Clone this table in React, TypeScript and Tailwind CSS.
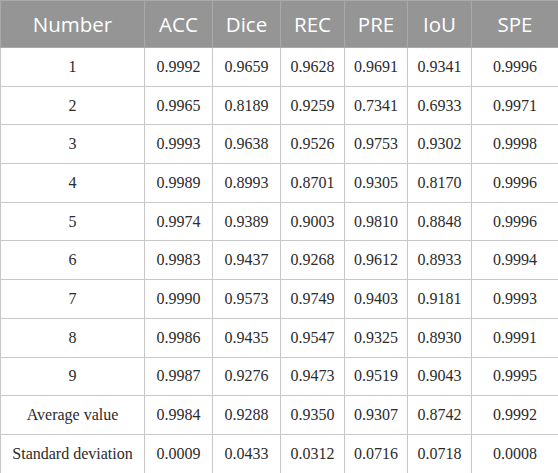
const headers = ["Number", "ACC", "Dice", "REC", "PRE", "IoU", "SPE"];

const widths = ["w-[144px]", "w-[68px]", "w-[68px]", "w-[64px]", "w-[63px]", "w-[64px]", "w-[87px]"];

const rows: string[][] = [
  ["1", "0.9992", "0.9659", "0.9628", "0.9691", "0.9341", "0.9996"],
  ["2", "0.9965", "0.8189", "0.9259", "0.7341", "0.6933", "0.9971"],
  ["3", "0.9993", "0.9638", "0.9526", "0.9753", "0.9302", "0.9998"],
  ["4", "0.9989", "0.8993", "0.8701", "0.9305", "0.8170", "0.9996"],
  ["5", "0.9974", "0.9389", "0.9003", "0.9810", "0.8848", "0.9996"],
  ["6", "0.9983", "0.9437", "0.9268", "0.9612", "0.8933", "0.9994"],
  ["7", "0.9990", "0.9573", "0.9749", "0.9403", "0.9181", "0.9993"],
  ["8", "0.9986", "0.9435", "0.9547", "0.9325", "0.8930", "0.9991"],
  ["9", "0.9987", "0.9276", "0.9473", "0.9519", "0.9043", "0.9995"],
  ["Average value", "0.9984", "0.9288", "0.9350", "0.9307", "0.8742", "0.9992"],
  ["Standard deviation", "0.0009", "0.0433", "0.0312", "0.0716", "0.0718", "0.0008"],
];

export default function App() {
  return (
    <div className="w-[558px] h-[473px] bg-white overflow-hidden">
      <table className="w-[558px] table-fixed border-collapse">
        <colgroup>
          {widths.map((w, i) => (
            <col key={i} className={w} />
          ))}
        </colgroup>
        <thead>
          <tr className="h-[47px] bg-[#959595]">
            {headers.map((h) => (
              <th
                key={h}
                className="border border-[#a9a9a9] text-center align-middle font-normal text-white text-[20.5px] font-['Open_Sans',sans-serif]"
              >
                {h}
              </th>
            ))}
          </tr>
        </thead>
        <tbody>
          {rows.map((r, i) => (
            <tr key={i} className="h-[38.7px]">
              {r.map((c, j) => (
                <td
                  key={j}
                  className="border border-[#c8c8c8] text-center align-middle text-[16px] text-[#2b2b2b] whitespace-nowrap font-['Liberation_Serif',serif]"
                >
                  {c}
                </td>
              ))}
            </tr>
          ))}
        </tbody>
      </table>
    </div>
  );
}
